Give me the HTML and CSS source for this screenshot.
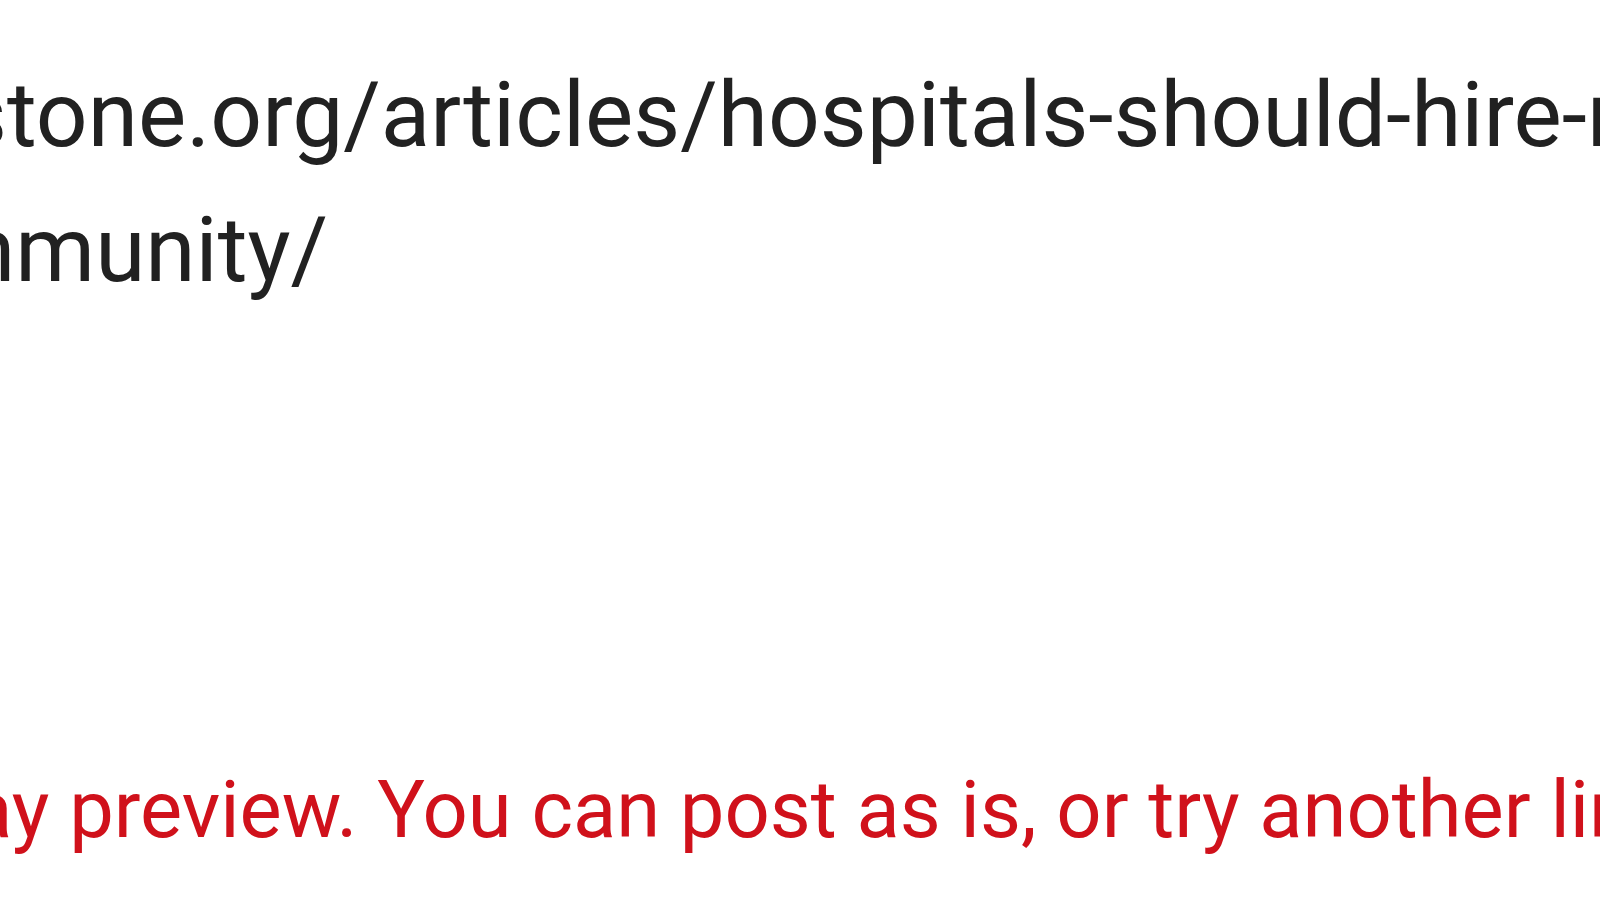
FILE: index.html
```html
<!DOCTYPE html>
<html lang="en">
<head>
<meta charset="utf-8">
<title>Link preview</title>
<link rel="stylesheet" href="styles.css">
</head>
<body>
<main class="frame">
  <div class="url">
    <div class="url-line first">stone.org/articles/hospitals-should-hire-nurses-from-the-</div>
    <div class="url-line second">community/</div>
  </div>
  <p class="error">display preview. You can post as is, or try another link.</p>
</main>
</body>
</html>
```

FILE: styles.css
```css
html, body {
  margin: 0;
  padding: 0;
  background: #ffffff;
}

.frame {
  width: 1600px;
  height: 900px;
  overflow: hidden;
  font-family: Roboto, "Liberation Sans", sans-serif;
  display: flex;
  flex-direction: column;
}

.url {
  margin-top: 48px;
  color: #212121;
  font-size: 91px;
  line-height: 135px;
}

.url-line {
  white-space: nowrap;
}

.url-line.first {
  margin-left: -40px;
}

.url-line.second {
  margin-left: -164px;
}

.error {
  margin: 442px 0 0 -200px;
  white-space: nowrap;
  color: #d0111b;
  font-size: 79.5px;
  line-height: 100px;
}
```
